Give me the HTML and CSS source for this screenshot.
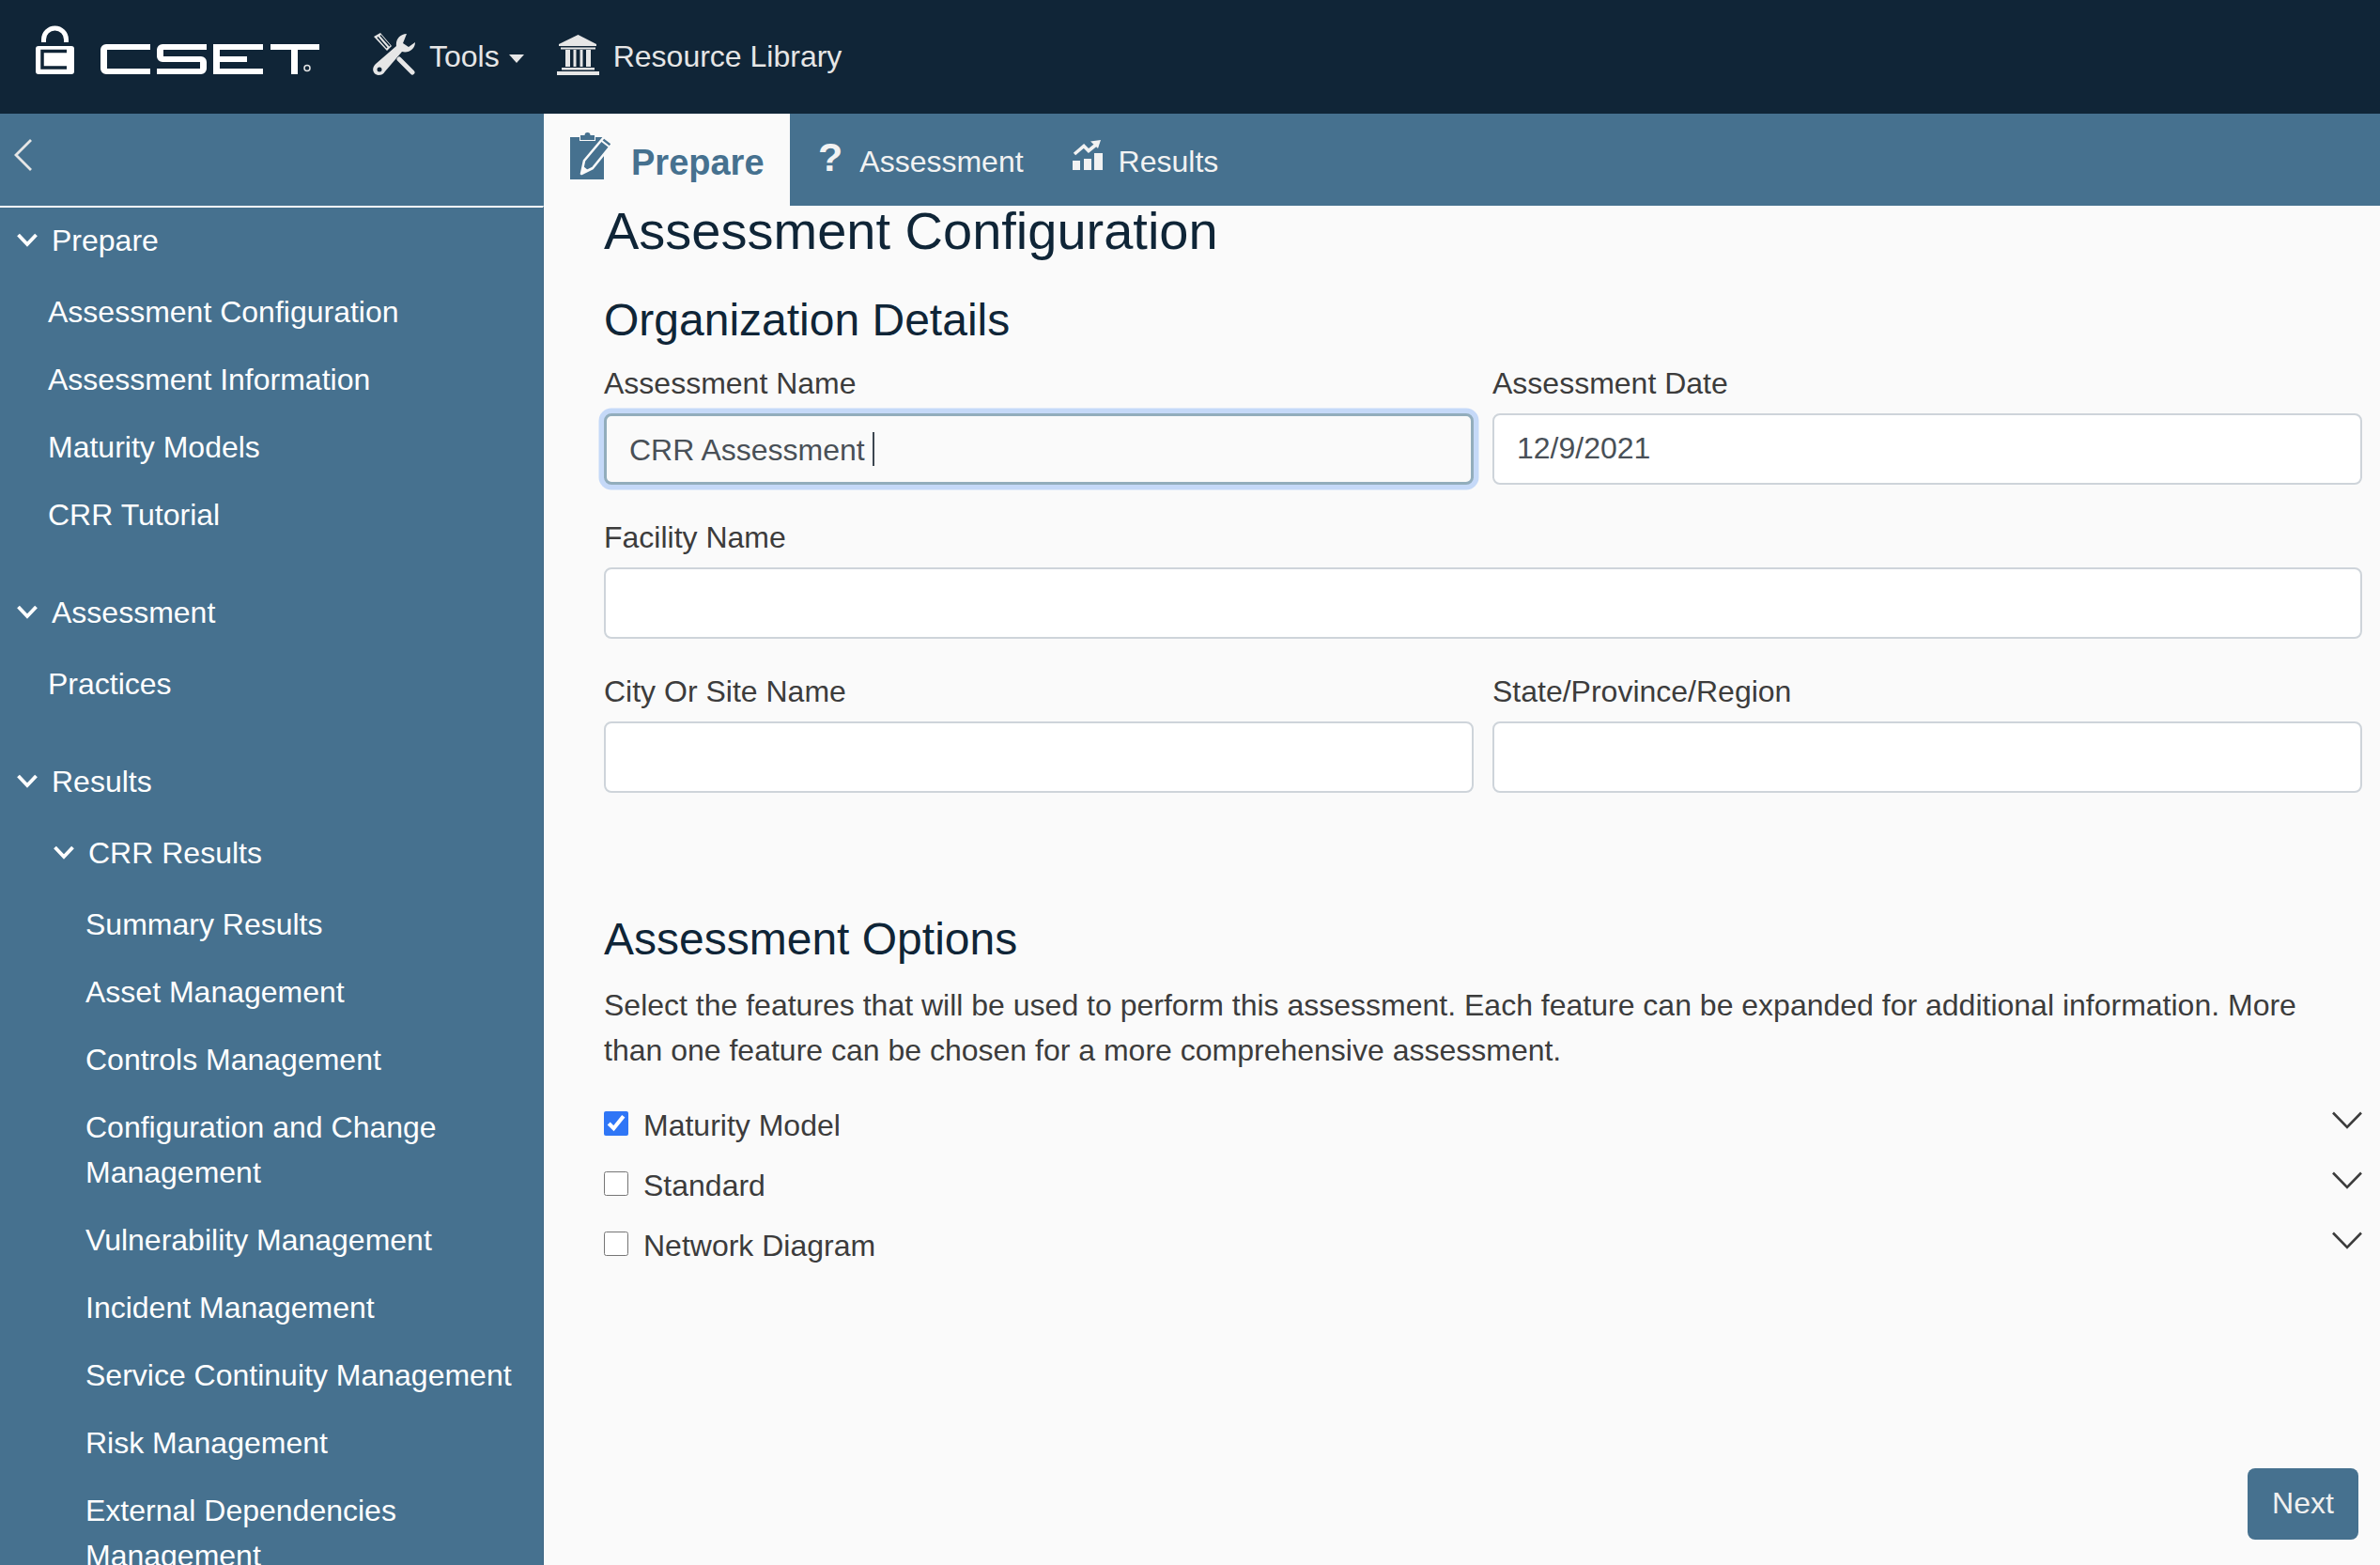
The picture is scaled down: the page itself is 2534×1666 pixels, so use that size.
FILE: index.html
```html
<!DOCTYPE html>
<html lang="en">
<head>
<meta charset="utf-8">
<title>CSET - Assessment Configuration</title>
<link rel="stylesheet" href="styles.css">
</head>
<body>
<header class="topbar">
  <svg class="logo" viewBox="0 0 302 52" role="img" aria-label="CSET">
    <title>CSET</title>
    <path class="logo-shackle" d="M8.500 18V15a12 12 0 0 1 24 0V18"/>
    <rect class="logo-white" x="0" y="22" width="41" height="30" rx="3"/>
    <path class="logo-slot" d="M33 27.500H7V45H33"/>
    <path class="logo-white" d="M122 20H75a6 6 0 0 0-6 6V46a6 6 0 0 0 6 6H122V46H76V26H122Z"/>
    <path class="logo-white" d="M182 20H135a6 6 0 0 0-6 6v7a6 6 0 0 0 6 6h40v7H129v6h47a6 6 0 0 0 6-6v-7a6 6 0 0 0-6-6h-40v-7h46z"/>
    <path class="logo-white" d="M189 20H242V26H196V33H225V39H196V46H242V52H189Z"/>
    <path class="logo-white" d="M250 20H302V26H279V52H272V26H250Z"/>
    <circle class="logo-reg" cx="289" cy="45.500" r="3"/>
  </svg>
  <nav class="topnav">
    <a class="topnav-item topnav-tools">
      <svg class="icon-tools" viewBox="0 0 45 45">
        <path class="tool-fill" d="M1 4 8 0 20 14 15 19Z"/>
        <path class="tool-gap" d="M5 4.500 15 16M8 2.500 18 14"/>
        <path class="tool-blade" d="M28 28 42 42"/>
        <path class="tool-fill" d="M36 1C29 1 24 7 25 14L3 33C-2 38 0 44 6 45 9 45 11 44 13 41L31 20C38 22 45 17 45 10L38 15 32 11Z"/>
        <circle class="tool-hole" cx="7" cy="39" r="2.500"/>
      </svg>
      <span>Tools</span>
      <span class="caret"></span>
    </a>
    <a class="topnav-item topnav-library">
      <svg class="icon-bank" viewBox="0 0 45 43">
        <path class="bank-fill" d="M22.500 0 42 10V12H2V10Z"/>
        <path class="bank-fill" d="M4 13.500H41V15.500H4ZM9 16H14V34H9ZM17.500 16H20.500V34H17.500ZM24.500 16H27.500V34H24.500ZM31 16H36V34H31ZM5 35H40V37.500H5ZM0 39H45V43H0Z"/>
      </svg>
      <span>Resource Library</span>
    </a>
  </nav>
</header>

<div class="tabrow">
  <div class="collapse-cell">
    <svg class="icon-back" viewBox="0 0 19 34"><path d="M18 1 2 17 18 33"/></svg>
  </div>
  <div class="tabs">
    <a class="tab tab-active">
      <svg class="icon-clip" viewBox="0 0 47 51">
        <path class="clip-board" d="M0 6H10V10H27V6H36V51H0Z"/>
        <path class="clip-board" d="M11 4H15.500A3 3 0 0 1 21.500 4H26V9H11Z"/>
        <path class="clip-pencil" d="M12 45 15 31 36 6 45 13 24 39Z"/>
        <path class="clip-line" d="M33 9.500 42 16.500"/>
        <path class="clip-tip" d="M12.500 44.500 14 37 19 41Z"/>
      </svg>
      <span class="tab-label-active">Prepare</span>
    </a>
    <a class="tab tab-assess"><span class="tab-q">?</span><span class="tab-label">Assessment</span></a>
    <a class="tab tab-results">
      <svg class="icon-chart" viewBox="0 0 32 32">
        <path class="chart-bar" d="M0 22H8V32H0ZM12 20H20V32H12ZM23 14H32V32H23Z"/>
        <path class="chart-line" d="M2 15 12 6.500 17 11.500 25 5"/>
        <path class="chart-bar" d="M30 0 19 1.500 27 9Z"/>
      </svg>
      <span class="tab-label">Results</span>
    </a>
  </div>
</div>

<div class="layout">
  <aside class="sidebar">
    <div class="nav-section">
      <div class="nav-head"><svg class="chev" viewBox="0 0 22 15"><path d="M1.500 2 11 12 20.500 2"/></svg>Prepare</div>
      <a class="nav-item">Assessment Configuration</a>
      <a class="nav-item">Assessment Information</a>
      <a class="nav-item">Maturity Models</a>
      <a class="nav-item">CRR Tutorial</a>
    </div>
    <div class="nav-section">
      <div class="nav-head"><svg class="chev" viewBox="0 0 22 15"><path d="M1.500 2 11 12 20.500 2"/></svg>Assessment</div>
      <a class="nav-item">Practices</a>
    </div>
    <div class="nav-section">
      <div class="nav-head"><svg class="chev" viewBox="0 0 22 15"><path d="M1.500 2 11 12 20.500 2"/></svg>Results</div>
      <div class="nav-head nav-subhead"><svg class="chev" viewBox="0 0 22 15"><path d="M1.500 2 11 12 20.500 2"/></svg>CRR Results</div>
      <a class="nav-item nav-sub">Summary Results</a>
      <a class="nav-item nav-sub">Asset Management</a>
      <a class="nav-item nav-sub">Controls Management</a>
      <a class="nav-item nav-sub">Configuration and Change Management</a>
      <a class="nav-item nav-sub">Vulnerability Management</a>
      <a class="nav-item nav-sub">Incident Management</a>
      <a class="nav-item nav-sub">Service Continuity Management</a>
      <a class="nav-item nav-sub">Risk Management</a>
      <a class="nav-item nav-sub">External Dependencies Management</a>
    </div>
  </aside>

  <main class="content">
    <h1 class="page-title">Assessment Configuration</h1>
    <h2 class="section-title">Organization Details</h2>
    <form class="fields">
      <div class="field">
        <label class="field-label">Assessment Name</label>
        <div class="focus-wrap">
          <input class="input input-focus" type="text" value="CRR Assessment">
          <span class="text-caret"></span>
        </div>
      </div>
      <div class="field">
        <label class="field-label">Assessment Date</label>
        <input class="input input-date" type="text" value="12/9/2021">
      </div>
      <div class="field field-wide">
        <label class="field-label">Facility Name</label>
        <input class="input" type="text">
      </div>
      <div class="field">
        <label class="field-label">City Or Site Name</label>
        <input class="input" type="text">
      </div>
      <div class="field">
        <label class="field-label">State/Province/Region</label>
        <input class="input" type="text">
      </div>
    </form>

    <h2 class="section-title options-title">Assessment Options</h2>
    <p class="options-text">Select the features that will be used to perform this assessment. Each feature can be expanded for additional information. More than one feature can be chosen for a more comprehensive assessment.</p>
    <div class="options">
      <div class="option">
        <input class="check" type="checkbox" checked>
        <span class="option-label">Maturity Model</span>
        <svg class="option-chev" viewBox="0 0 32 19"><path d="M1 1.500 16 17 31 1.500"/></svg>
      </div>
      <div class="option">
        <input class="check" type="checkbox">
        <span class="option-label">Standard</span>
        <svg class="option-chev" viewBox="0 0 32 19"><path d="M1 1.500 16 17 31 1.500"/></svg>
      </div>
      <div class="option">
        <input class="check" type="checkbox">
        <span class="option-label">Network Diagram</span>
        <svg class="option-chev" viewBox="0 0 32 19"><path d="M1 1.500 16 17 31 1.500"/></svg>
      </div>
    </div>
    <button class="next-btn" type="button">Next</button>
  </main>
</div>
</body>
</html>
```

FILE: styles.css
```css
* { box-sizing: border-box; }

html, body {
  margin: 0;
  height: 1666px;
  overflow: hidden;
}

body {
  display: flex;
  flex-direction: column;
  background: #fafafa;
  color: #3c3c3c;
  font-family: "Liberation Sans", Arial, sans-serif;
  font-size: 32px;
  line-height: 48px;
}

/* top bar */
.topbar {
  flex: none;
  display: flex;
  align-items: center;
  height: 121px;
  padding-left: 38px;
  background: #102537;
}

.logo {
  flex: none;
  width: 302px;
  height: 52px;
  margin-bottom: 15px;
}
.logo-white { fill: #fff; }
.logo-shackle { fill: none; stroke: #fff; stroke-width: 5; }
.logo-slot { fill: none; stroke: #102537; stroke-width: 3.5; }
.logo-reg { fill: none; stroke: #e6e6e6; stroke-width: 1.5; }

.topnav {
  display: flex;
  align-items: center;
  margin: -1px 0 0 57px;
  color: #e6e6e6;
}
.topnav-item {
  display: flex;
  align-items: center;
}
.icon-tools {
  width: 45px;
  height: 45px;
  margin: 0 15px 6px 0;
}
.tool-fill { fill: #e6e6e6; }
.tool-gap { fill: none; stroke: #102537; stroke-width: 1.5; }
.tool-blade { fill: none; stroke: #e6e6e6; stroke-width: 5; stroke-linecap: round; }
.tool-hole { fill: #102537; }
.caret {
  width: 0;
  height: 0;
  margin: 4px 0 0 10px;
  border-top: 9px solid #e6e6e6;
  border-left: 8px solid transparent;
  border-right: 8px solid transparent;
}
.topnav-library { margin-left: 35px; }
.icon-bank {
  width: 45px;
  height: 43px;
  margin: 0 15px 4px 0;
}
.bank-fill { fill: #e6e6e6; }

/* tab row */
.tabrow {
  flex: none;
  display: flex;
  height: 98px;
  background: #46718f;
}
.collapse-cell {
  flex: none;
  display: flex;
  align-items: flex-start;
  width: 579px;
  padding: 27px 0 0 15px;
}
.icon-back { width: 19px; height: 34px; }
.icon-back path { fill: none; stroke: #e6e6e6; stroke-width: 2.800; }

.tabs { display: flex; }
.tab {
  display: flex;
  align-items: center;
  color: #f2f2f2;
}
.tab-label { margin-top: 3px; }
.tab-active {
  width: 262px;
  padding: 0 0 0 28px;
  background: #fafafa;
  color: #46718f;
  font-size: 38px;
  font-weight: 700;
}
.tab-label-active { margin-top: 6px; }
.icon-clip {
  width: 47px;
  height: 51px;
  margin: 0 18px 10px 0;
}
.clip-board { fill: #46718f; }
.clip-pencil { fill: #46718f; stroke: #fafafa; stroke-width: 2.600; stroke-linejoin: round; }
.clip-line { fill: none; stroke: #fafafa; stroke-width: 2; }
.clip-tip { fill: #fafafa; }
.tab-assess { margin-left: 30px; }
.tab-q {
  margin: -6px 18px 0 0;
  font-size: 43px;
  font-weight: 700;
}
.tab-results { margin-left: 52px; }
.icon-chart {
  width: 32px;
  height: 32px;
  margin: 0 17px 10px 0;
}
.chart-bar { fill: #f2f2f2; }
.chart-line { fill: none; stroke: #f2f2f2; stroke-width: 3.600; }

/* body layout */
.layout {
  flex: 1;
  display: flex;
  min-height: 0;
}

.sidebar {
  flex: none;
  width: 579px;
  overflow: hidden;
  border-top: 2px solid #fafafa;
  border-right: 1px solid #3d6582;
  background: #46718f;
  color: #fff;
}
.nav-section + .nav-section { margin-top: 34px; }
.nav-head {
  display: flex;
  align-items: center;
  gap: 15px;
  height: 68px;
  margin-bottom: 6px;
  padding: 1px 0 0 18px;
}
.nav-subhead {
  margin-top: 8px;
  padding-left: 57px;
}
.chev {
  flex: none;
  width: 22px;
  height: 15px;
}
.chev path { fill: none; stroke: #fff; stroke-width: 3.800; }
.nav-item {
  display: block;
  padding: 13px 20px 11px 51px;
}
.nav-sub { padding-left: 91px; }

/* main */
.content {
  flex: 1;
  display: flex;
  flex-direction: column;
  min-width: 0;
  padding: 0 19px 27px 64px;
}
.page-title {
  margin: -1px 0 0;
  color: #0f2537;
  font-size: 56px;
  font-weight: 400;
  line-height: 56px;
}
.section-title {
  margin: 37px 0 13px;
  color: #0f2537;
  font-size: 48px;
  font-weight: 400;
  line-height: 60px;
}

.fields {
  display: grid;
  grid-template-columns: 1fr 1fr;
  column-gap: 20px;
  row-gap: 32px;
  align-items: start;
}
.field-wide { grid-column: 1 / -1; }
.field-label {
  display: block;
  margin-bottom: 8px;
}
.input {
  display: block;
  width: 100%;
  height: 76px;
  padding: 0 24px;
  border: 2px solid #ced4da;
  border-radius: 8px;
  background: #fff;
  color: #495057;
  font: inherit;
  outline: none;
}
.input-date { padding-bottom: 2px; }
.focus-wrap { position: relative; margin-top: 2px; }
.input-focus {
  padding: 2px 24px 0;
  border: 3.500px solid #92adbc;
  background: #fafafa;
  box-shadow: 0 0 0 5.500px #c5d9f8;
}
.text-caret {
  position: absolute;
  left: 286px;
  top: 20px;
  width: 2px;
  height: 36px;
  background: #3c4650;
}

.options-title { margin: 126px 0 16px; }
.options-text { margin: 0 0 24px; }
.options { display: flex; flex-direction: column; }
.option {
  display: flex;
  align-items: center;
  height: 64px;
}
.check {
  flex: none;
  width: 26px;
  height: 26px;
  margin: -4px 16px 0 0;
  accent-color: #2f76f6;
}
.option-label { flex: 1; }
.option-chev {
  flex: none;
  width: 32px;
  height: 19px;
  margin-bottom: 11px;
}
.option-chev path { fill: none; stroke: #3c3c3c; stroke-width: 2.600; }

.next-btn {
  align-self: flex-end;
  width: 118px;
  height: 76px;
  margin: auto 4px 0 0;
  padding: 0 0 2px;
  border: 0;
  border-radius: 8px;
  background: #46718f;
  color: #f0f0f0;
  font: inherit;
}
```
